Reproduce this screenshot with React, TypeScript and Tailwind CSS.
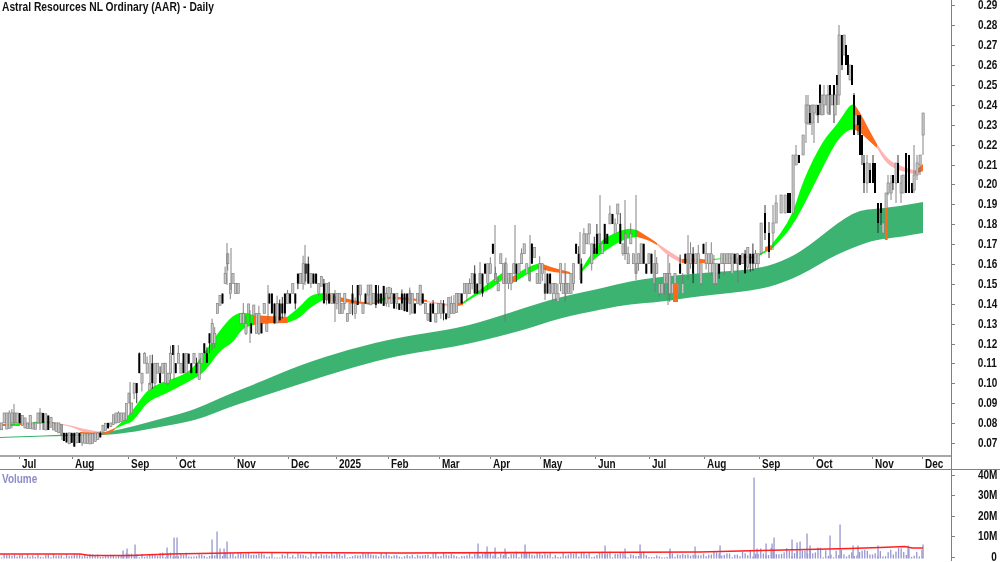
const priceLabels = ["0.29","0.28","0.27","0.26","0.25","0.24","0.23","0.22","0.21","0.20","0.19","0.18","0.17","0.16","0.15","0.14","0.13","0.12","0.11","0.10","0.09","0.08","0.07"];
const volumeLabels = ["40M", "30M", "20M", "10M", "0"];

// label + distance to the next tick
const months: [string, number][] = [["", 19],["Jul", 53],["Aug", 56],["Sep", 48],["Oct", 58],["Nov", 54],["Dec", 48],["2025", 52],["Feb", 51],["Mar", 51],["Apr", 50],["May", 55],["Jun", 54],["Jul", 55],["Aug", 55],["Sep", 54],["Oct", 59],["Nov", 50],["Dec", 28]];

type Band = [number, number, number];
type Bar = [number, number, number, number, number, number];

const slowBand: Band[] = [[0,437,438],[40,435.5,436.5],[100,433.5,435.5],[127,428,433],[160,419,427],[187,412,422],[205,405,417],[227,395,408],[260,382,397],[300,365,384],[350,349,368],[400,337,355],[460,328,346],[500,316,336],[527,307,329],[560,297,318],[603,288,309],[630,281,304],[660,277,302],[700,273,296],[760,269,290],[790,258,280],[810,245,270],[830,229,258],[845,218,251],[860,210,245],[875,209,240],[900,206,237],[923,202,233]];

const fastSegments: { color: string; points: Band[] }[] = [
  { color: "#ff6a1a", points: [[1,424,426],[9,424,426]] },
  { color: "#00ff00", points: [[9,424,426],[20,423,426]] },
  { color: "#ff6a1a", points: [[20,423,425],[33,423,425]] },
  { color: "#00ff00", points: [[33,422,424],[47,421,423]] },
  { color: "#ff6a1a", points: [[47,421,423],[57,423,424.5]] },
  { color: "#ffb4b4", points: [[57,423,424.5],[70,425,426],[80,428,431],[90,430,434],[101,432,434.5]] },
  { color: "#ff6a1a", points: [[80,432,433],[101,433.5,434.5],[108,431,434.5],[115,428,429.5]] },
  { color: "#00ff00", points: [[115,428,429],[125,419,424],[133,410,422],[147,390,402],[160,383,396],[167,381,393],[190,372,381],[205,352,372],[220,330,350],[233,315,343],[243,312,327],[253,315,325]] },
  { color: "#ff6a1a", points: [[253,315,325],[270,316,323],[287,317,323]] },
  { color: "#00ff00", points: [[287,317,323],[300,307,318],[310,295,307],[323,293,300]] },
  { color: "#ff6a1a", points: [[323,293,300],[343,298,302],[367,303,304.5],[375,302,304]] },
  { color: "#00ff00", points: [[375,301,303],[388,296,299]] },
  { color: "#ff6a1a", points: [[388,296,299],[410,298,300],[427,300,302]] },
  { color: "#ffb4b4", points: [[427,301,302],[445,304,306],[458,304,307]] },
  { color: "#ff6a1a", points: [[458,303,306],[463,302,305]] },
  { color: "#00ff00", points: [[463,302,304],[480,290,293],[490,282,290],[502,273,280]] },
  { color: "#ff6a1a", points: [[502,273,280],[508,280,284],[515,275,282]] },
  { color: "#00ff00", points: [[515,275,282],[527,267,274],[540,263,268]] },
  { color: "#ff6a1a", points: [[540,263,268],[550,267,272],[570,272,274]] },
  { color: "#00ff00", points: [[580,272,274],[590,255,263],[603,238,252],[627,228,237],[637,230,237]] },
  { color: "#ff6a1a", points: [[637,230,237],[650,238,240.5],[657,243,245]] },
  { color: "#ffb4b4", points: [[657,243,245],[670,252,258],[682,259,263]] },
  { color: "#ff6a1a", points: [[682,259,263],[697,258,262],[713,261,264]] },
  { color: "#00ff00", points: [[713,259,260],[735,257,258]] },
  { color: "#ff6a1a", points: [[737,256,258],[755,257,258]] },
  { color: "#00ff00", points: [[755,256,258],[770,248,250]] },
  { color: "#ff6a1a", points: [[765,247,251],[772,245,250]] },
  { color: "#00ff00", points: [[772,244,249],[790,223,230],[803,180,207],[823,140,167],[837,125,140],[850,104,128],[855,105,130]] },
  { color: "#ff6a1a", points: [[855,105,130],[860,112,132],[868,128,140],[877,144,148]] },
  { color: "#ffb4b4", points: [[877,144,148],[887,160,165],[903,167,172],[917,171,174.5]] },
  { color: "#ff6a1a", points: [[915,171,174.5],[923,164,171]] },
];

const candleEnvelope: Band[] = [[0,415,430],[14,408,428],[25,418,428],[40,410,430],[55,420,430],[62,425,440],[75,432,447],[90,434,445],[100,432,438],[103,425,432],[110,420,427],[115,412,424],[125,410,420],[130,385,420],[140,350,395],[150,355,390],[160,350,385],[170,345,385],[180,345,375],[190,355,375],[200,350,380],[210,325,355],[220,295,340],[227,250,295],[235,270,305],[243,300,335],[250,305,335],[260,305,335],[270,285,330],[280,300,320],[295,280,310],[305,250,285],[315,270,290],[325,280,305],[340,285,322],[360,285,320],[380,285,305],[400,290,310],[420,285,315],[432,300,323],[445,300,320],[460,290,310],[470,270,310],[480,260,300],[495,235,280],[505,260,315],[515,235,290],[530,240,280],[545,265,300],[565,262,302],[580,235,285],[600,200,260],[615,200,240],[630,205,270],[640,205,280],[650,250,292],[665,255,300],[675,250,305],[690,240,285],[705,240,285],[720,243,285],[740,255,275],[755,240,270]];

// bars of the last months, read off the chart: x, wick top, wick bottom, body top, body bottom, black
const lastBars: Bar[] = [[761,223,255,223,253,0],[765,205,240,213,233,1],[769,222,258,233,252,1],[773,205,250,223,233,0],[776,195,223,203,223,0],[781,195,213,195,213,0],[785,195,213,195,213,0],[788,193,213,193,213,1],[790,193,213,193,213,1],[793,155,213,155,213,0],[796,145,165,155,165,0],[799,155,163,155,163,1],[803,135,155,135,155,0],[806,95,143,105,123,0],[808,95,125,105,123,0],[810,105,125,113,123,1],[812,105,135,105,123,0],[814,105,143,105,113,0],[817,105,115,105,115,0],[818,105,123,105,115,1],[820,84,115,85,103,1],[822,95,115,95,115,0],[824,85,115,95,105,0],[827,95,105,95,105,0],[828,85,115,95,113,0],[830,85,115,85,95,1],[832,95,105,95,105,0],[834,85,123,85,105,1],[835,95,115,95,115,0],[837,75,105,75,85,1],[839,25,105,35,95,0],[842,35,70,35,65,1],[844,35,55,35,55,0],[846,45,65,45,65,1],[848,55,75,55,75,1],[850,65,80,65,80,0],[852,65,85,65,85,1],[854,93,135,95,135,1],[856,115,125,115,125,0],[858,115,135,115,125,1],[860,115,155,115,155,1],[862,135,165,135,155,1],[864,155,193,163,183,1],[867,155,193,163,183,0],[870,163,183,170,183,1],[873,155,183,163,183,1],[875,163,193,163,193,1],[878,203,233,203,223,1],[881,203,225,203,213,1],[883,223,233,223,233,0],[886,193,233,193,223,0],[888,175,195,183,193,0],[891,175,200,183,193,0],[893,175,190,175,183,1],[896,163,203,163,183,0],[898,155,183,163,183,1],[901,175,203,183,193,0],[903,175,193,175,193,0],[906,153,193,153,193,1],[909,155,193,155,193,1],[912,183,193,183,193,1],[914,145,193,175,190,0],[917,155,180,163,175,0],[920,155,175,155,165,0],[923,113,155,113,135,0]];

// long wicks that stand out above the rest
const spikes: [number, number, number][] = [[14,404,425],[40,408,430],[62,425,440],[130,382,415],[150,355,385],[174,345,380],[227,243,285],[231,248,290],[250,310,343],[268,285,320],[305,245,285],[335,290,322],[410,290,315],[480,262,295],[495,225,280],[505,262,322],[515,225,275],[530,235,282],[545,268,300],[565,263,302],[580,232,280],[600,195,250],[625,200,260],[636,195,280],[655,250,292],[668,255,305],[688,235,280],[738,258,283]];

const volumeSpikes: Record<number, number> = {123:8,127:10,135:14,167:11,174:21,177:21,212:19,217:27,220:10,224:10,227:17,478:15,487:12,495:11,505:10,525:14,605:13,625:10,640:14,670:10,695:12,720:13,754:81,757:10,766:15,772:15,774:21,792:19,797:16,800:17,807:25,810:13,830:23,840:34,853:13,858:13,878:13,908:13,923:14};

const redLine = "0,554 80,554 90,555.5 130,555.5 170,554 260,552.5 400,553 560,552.5 700,552 760,550.5 850,548.5 880,547.5 905,546.5 912,548 923,548";

function seeded(seed: number) {
  let s = seed;
  return () => {
    s = (s * 16807) % 2147483647;
    return s / 2147483647;
  };
}

function lookup(x: number) {
  for (let i = 1; i < candleEnvelope.length; i++) {
    const [x1, h1, l1] = candleEnvelope[i];
    if (x <= x1) {
      const [x0, h0, l0] = candleEnvelope[i - 1];
      const t = (x - x0) / (x1 - x0);
      return { hi: h0 + (h1 - h0) * t, lo: l0 + (l1 - l0) * t };
    }
  }
  return { hi: 250, lo: 270 };
}

function makeCandles(): Bar[] {
  const rnd = seeded(4711);
  const out: Bar[] = [];
  for (let x = 1.5; x < 759; x += 2.6) {
    const { hi, lo } = lookup(x);
    const wanted = rnd() < 0.7 ? 9.95 : 19.9;
    // prices move in half cent steps, which is about 10px
    const raw = hi + rnd() * Math.max(0, lo - hi - wanted);
    const top = Math.max(hi, Math.round((raw - 5) / 9.95) * 9.95 + 5);
    const bot = Math.min(lo, top + wanted);
    const wickTop = Math.max(hi, top - (rnd() < 0.3 ? 5 + rnd() * 7 : 0));
    const wickBot = Math.min(lo, bot + (rnd() < 0.3 ? 5 + rnd() * 7 : 0));
    out.push([x, wickTop, wickBot, top, Math.max(bot, top + 2), rnd() < 0.33 ? 1 : 0]);
  }
  return [...out, ...lastBars];
}

function makeVolumes() {
  const rnd = seeded(91);
  const out: { x: number; h: number }[] = [];
  for (let x = 1.5; x <= 923; x += 2.6) {
    const size = x > 740 ? 10 : x > 470 ? 6 : x > 120 ? 5 : 3.5;
    out.push({ x, h: 1 + rnd() * size });
  }
  for (const [k, h] of Object.entries(volumeSpikes)) out.push({ x: Number(k), h });
  return out;
}

// rounds the corners so the moving averages read as curves
function curve(points: [number, number][], start: string) {
  let d = `${start} ${points[0][0]} ${points[0][1]}`;
  for (let i = 1; i < points.length - 1; i++) {
    const [x, y] = points[i];
    const [nx, ny] = points[i + 1];
    d += ` Q ${x} ${y} ${(x + nx) / 2} ${(y + ny) / 2}`;
  }
  const last = points[points.length - 1];
  return `${d} L ${last[0]} ${last[1]}`;
}

function bandPath(points: Band[]) {
  const top = points.map(([x, up]): [number, number] => [x, up]);
  const bottom = [...points].reverse().map(([x, , lo]): [number, number] => [x, lo]);
  return `${curve(top, "M")} ${curve(bottom, "L")} Z`;
}

const candles = makeCandles();
const volumes = makeVolumes();

function PriceChart() {
  return (
    <svg width="951" height="455" viewBox="0 0 951 455" className="block blur-[0.35px]">
      <path d={bandPath(slowBand)} fill="#3cb371" />
      {fastSegments.map((seg, i) => (
        <path key={i} d={bandPath(seg.points)} fill={seg.color} />
      ))}
      {candles.map(([x, wickTop, wickBot, top, bot, black], i) => (
        <g key={i}>
          <line x1={x} x2={x} y1={wickTop} y2={wickBot} stroke={black ? "#222" : "#777"} strokeWidth="0.9" />
          {black ? (
            <rect x={x - 1} y={top} width="2" height={bot - top} fill="#000" />
          ) : (
            <rect x={x - 1} y={top} width="2.2" height={bot - top} fill="#c6c6c6" stroke="#7c7c7c" strokeWidth="0.6" />
          )}
        </g>
      ))}
      {spikes.map(([x, y1, y2], i) => (
        <line key={i} x1={x} x2={x} y1={y1} y2={y2} stroke="#777" strokeWidth="0.9" />
      ))}
      <rect x="673" y="283" width="5" height="19" fill="#ff6a1a" />
      <rect x="885" y="208" width="2.6" height="32" fill="#ff6a1a" />
    </svg>
  );
}

function VolumeChart() {
  // svg starts at y=470 of the page
  return (
    <svg width="951" height="92" viewBox="0 470 951 92" className="block blur-[0.3px]">
      {volumes.map((v, i) => (
        <rect key={i} x={v.x - 0.6} y={558.5 - v.h} width="1.3" height={v.h} fill="#9696d0" />
      ))}
      <polyline points={redLine} fill="none" stroke="#ff2020" strokeWidth="1.6" />
    </svg>
  );
}

export default function App() {
  return (
    <div className="relative flex h-[562px] w-[1000px] flex-col overflow-hidden bg-white font-['Liberation_Sans',Arial,sans-serif] text-[#111]">
      <div className="flex h-[470px] border-b border-[#808080]">
        <div className="relative flex w-[951px] flex-col">
          <div className="absolute left-[2px] top-0 origin-left scale-x-[0.855] whitespace-nowrap text-[12px] font-bold leading-[14px]">
            Astral Resources NL Ordinary (AAR) - Daily
          </div>
          <PriceChart />
          <div className="flex h-[14px] border-t-2 border-[#a8a8a8]">
            {months.map(([label, width], i) => (
              <div key={i} className="relative shrink-0" style={{ width }}>
                {label && <span className="absolute left-0 top-0 h-[2px] w-px bg-[#808080]" />}
                {label && (
                  <span className="absolute left-[2.5px] top-0 origin-left scale-x-[0.83] text-[12px] font-bold leading-[14px]">
                    {label}
                  </span>
                )}
              </div>
            ))}
          </div>
        </div>
        <div className="h-full w-[49px] border-l border-[#808080]">
          <div className="-mt-[4px]">
            {priceLabels.map((label) => (
              <div key={label} className="flex h-[19.9px] items-center justify-between pr-[3px]">
                <span className="h-px w-[3px] bg-[#808080]" />
                <span className="origin-right scale-x-[0.83] text-[12px] font-bold leading-[9px]">{label}</span>
              </div>
            ))}
          </div>
        </div>
      </div>
      <div className="flex h-[91px]">
        <div className="relative w-[951px]">
          <div className="absolute left-[2px] top-[2px] origin-left scale-x-[0.83] text-[12px] font-bold leading-[14px] text-[#8c8cc8]">
            Volume
          </div>
          <VolumeChart />
        </div>
        <div className="h-full w-[49px] border-l border-[#808080]">
          <div className="-mt-[5.25px]">
            {volumeLabels.map((label) => (
              <div key={label} className="flex h-[20.5px] items-center justify-between pr-[3px]">
                <span className="h-px w-[3px] bg-[#808080]" />
                <span className="origin-right scale-x-[0.83] text-[12px] font-bold leading-[9px]">{label}</span>
              </div>
            ))}
          </div>
        </div>
      </div>
    </div>
  );
}
